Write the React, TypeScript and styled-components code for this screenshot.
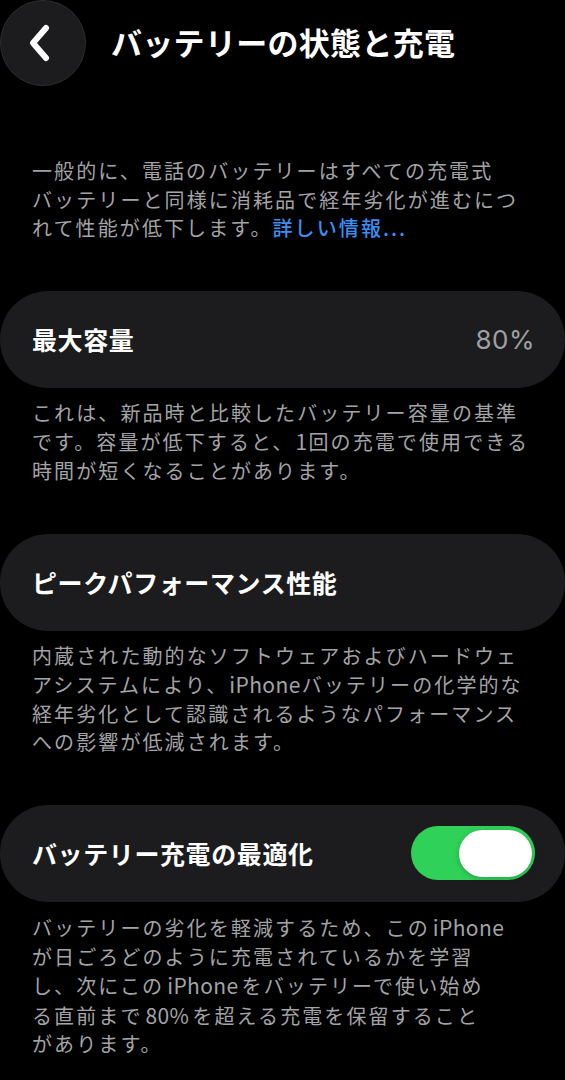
import React, { FC, useState } from 'react';
import styled, { createGlobalStyle } from 'styled-components';

const GlobalStyle = createGlobalStyle`
	html, body {
		margin: 0;
		padding: 0;
		background: #000;
	}
	body {
		font-family: "Noto Sans CJK JP", "Noto Sans", "Liberation Sans", sans-serif;
		-webkit-font-smoothing: antialiased;
	}
`

const App: FC = () => {
	const [optimized, setOptimized] = useState(true);

	return (
		<>
			<GlobalStyle />
			<Page>
				<Header>
					<BackButton aria-label="戻る">
						<svg width="26" height="40" viewBox="0 0 26 40" fill="none">
							<path d="M19 5 L6 20 L19 35" stroke="#fff" strokeWidth="6" strokeLinecap="round" strokeLinejoin="round" />
						</svg>
					</BackButton>
					<Title>バッテリーの状態と充電</Title>
				</Header>

				<Intro>
					一般的に、電話のバッテリーはすべての充電式<br />
					バッテリーと同様に消耗品で経年劣化が進むにつ<br />
					れて性能が低下します。<Link href="#">詳しい情報...</Link>
				</Intro>

				<Card>
					<CardLabel>最大容量</CardLabel>
					<CardValue>80%</CardValue>
				</Card>
				<Footnote>
					これは、新品時と比較したバッテリー容量の基準<br />
					です。容量が低下すると、<Latin $tight>1</Latin>回の充電で使用できる<br />
					時間が短くなることがあります。
				</Footnote>

				<Card>
					<CardLabel>ピークパフォーマンス性能</CardLabel>
				</Card>
				<Footnote>
					内蔵された動的なソフトウェアおよびハードウェ<br />
					アシステムにより、<Latin $tight>iPhone</Latin>バッテリーの化学的な<br />
					経年劣化として認識されるようなパフォーマンス<br />
					への影響が低減されます。
				</Footnote>

				<Card>
					<CardLabel>バッテリー充電の最適化</CardLabel>
					<Switch $on={optimized} onClick={() => setOptimized(!optimized)}>
						<Knob />
					</Switch>
				</Card>
				<Footnote>
					バッテリーの劣化を軽減するため、この<Latin>iPhone</Latin><br />
					が日ごろどのように充電されているかを学習<br />
					し、次にこの<Latin>iPhone</Latin>をバッテリーで使い始め<br />
					る直前まで<Latin>80%</Latin>を超える充電を保留すること<br />
					があります。
				</Footnote>
			</Page>
		</>
	)
}

export default App;


const Page = styled.div`
	width: 565px;
	height: 1080px;
	background: #000;
	color: #fff;
	overflow: hidden;
`

const Header = styled.div`
	display: flex;
	align-items: center;
	height: 86px;
`

const BackButton = styled.button`
	display: flex;
	justify-content: center;
	align-items: center;
	width: 86px;
	height: 86px;
	padding: 0 6px 0 0;
	border-radius: 50%;
	background: #1c1c1e;
	border: 1px solid #2e2e31;
	box-sizing: border-box;
	cursor: pointer;
`

const Title = styled.h1`
	margin: -3px 0 0 25px;
	font-size: 31px;
	font-weight: 700;
	letter-spacing: 0.3px;
	color: #fff;
`

const Intro = styled.p`
	margin: 71px 0 0;
	padding: 0 12px 0 32px;
	font-size: 20px;
	letter-spacing: 2.1px;
	line-height: 28.6px;
	color: #a3a3a8;
`

const Link = styled.a`
	color: #3b8ff3;
	text-decoration: none;
	font-weight: 500;
`

const Latin = styled.span<{ $tight?: boolean }>`
	font-size: 21px;
	letter-spacing: 0.4px;
	margin: 0 ${p => p.$tight ? '1px' : '3px'};
`

const Card = styled.div`
	display: flex;
	align-items: center;
	justify-content: space-between;
	height: 97px;
	margin-top: 48px;
	padding: 0 30px 0 32px;
	border-radius: 48px;
	background: #1c1c1e;
`

const CardLabel = styled.div`
	font-size: 25px;
	font-weight: 600;
	letter-spacing: 0.6px;
	color: #fff;
`

const CardValue = styled.div`
	font-family: "Inter", "Noto Sans", sans-serif;
	font-size: 26px;
	letter-spacing: 0.5px;
	color: #a0a0a5;
`

const Footnote = styled.p`
	margin: 11px 0 0;
	padding: 0 12px 0 32px;
	font-size: 20px;
	letter-spacing: 2.1px;
	line-height: 28.6px;
	color: #a3a3a8;
`

const Switch = styled.button<{ $on: boolean }>`
	display: flex;
	align-items: center;
	justify-content: ${p => p.$on ? 'flex-end' : 'flex-start'};
	width: 124px;
	height: 54px;
	padding: 0 3px;
	border: none;
	border-radius: 27px;
	background: ${p => p.$on ? '#30d158' : '#39393d'};
	box-sizing: border-box;
	cursor: pointer;
`

const Knob = styled.span`
	display: block;
	width: 73px;
	height: 47px;
	border-radius: 24px;
	background: #fff;
	box-shadow: 0 2px 6px rgba(0, 0, 0, 0.2);
`
